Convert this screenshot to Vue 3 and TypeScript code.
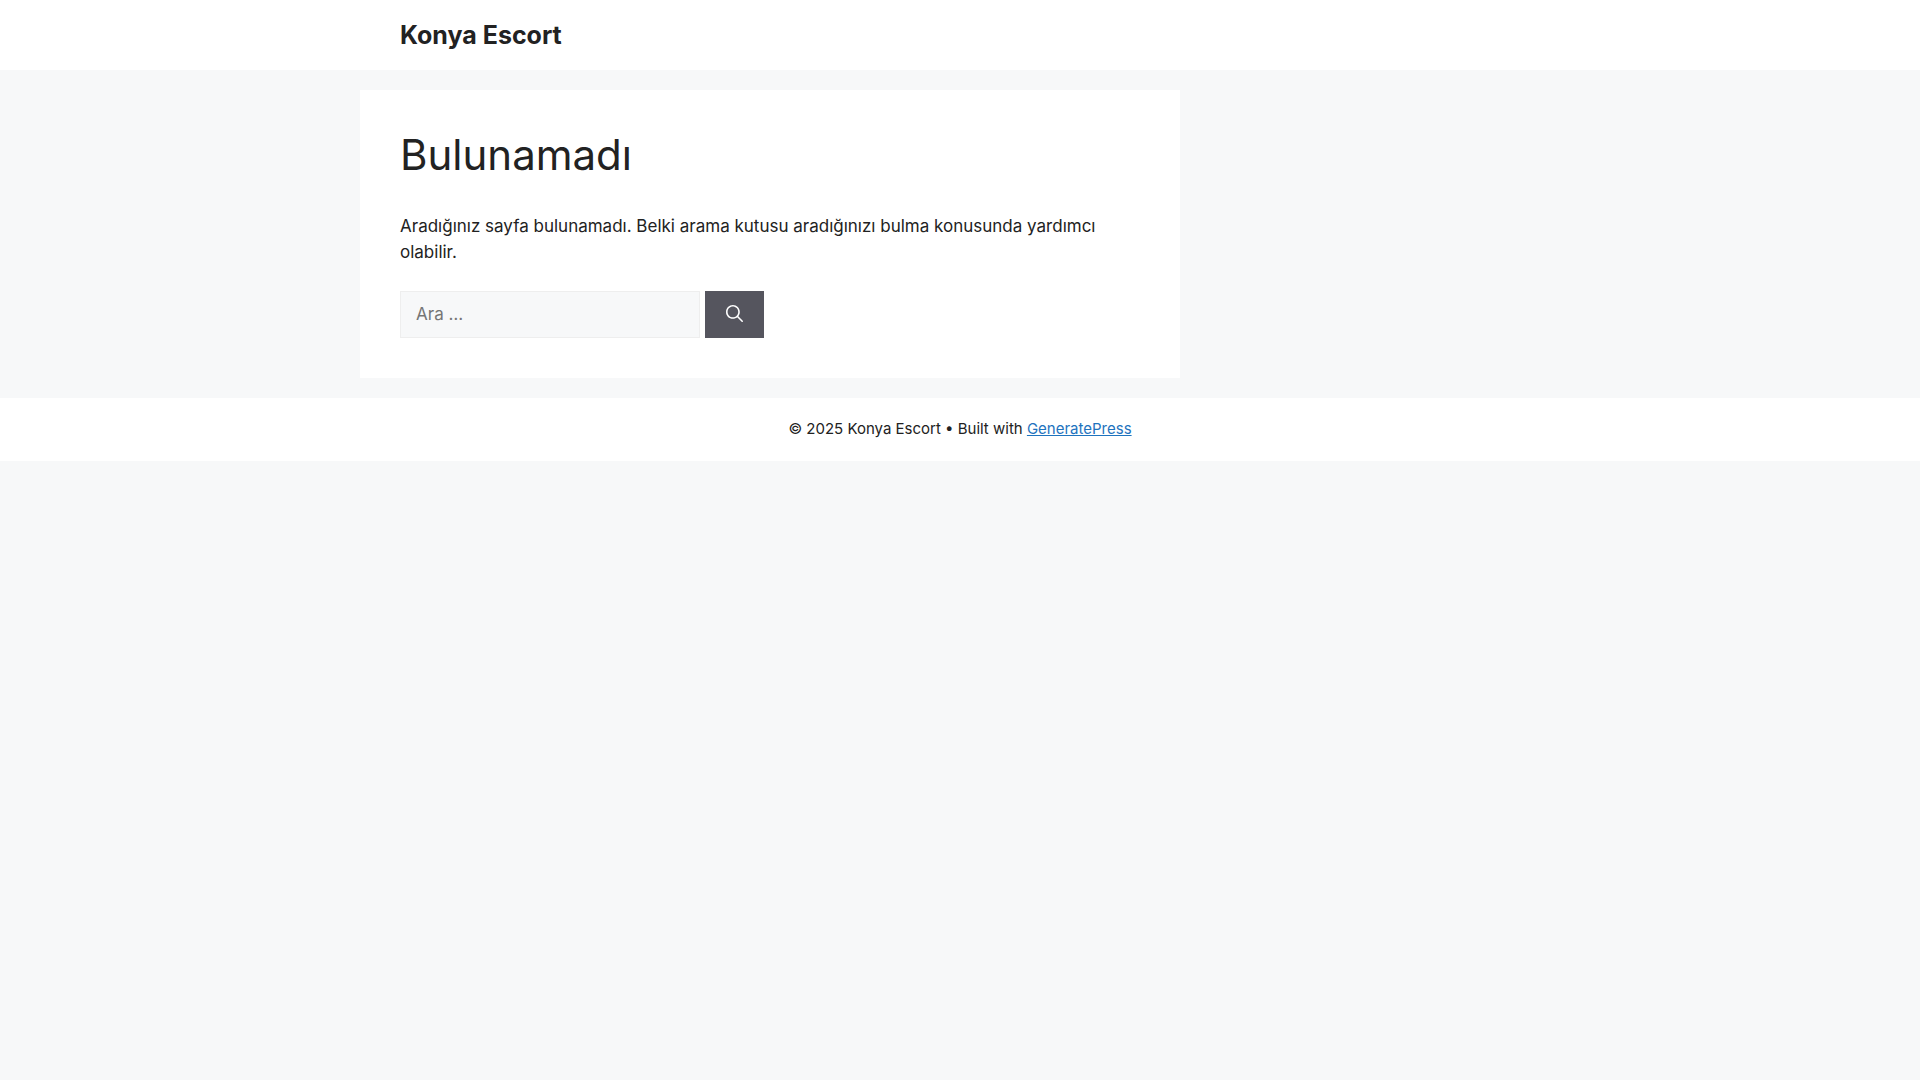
<script setup lang="ts">
import { ref } from 'vue'

const query = ref('')
</script>

<template>
  <div class="page">
    <header class="site-header">
      <div class="inside-header">
        <a class="site-title" href="#">Konya Escort</a>
      </div>
    </header>

    <div class="site-content">
      <main class="content-area">
        <h1>Bulunamadı</h1>
        <p>Aradığınız sayfa bulunamadı. Belki arama kutusu aradığınızı bulma konusunda yardımcı olabilir.</p>
        <form class="search-form" role="search" @submit.prevent>
          <input v-model="query" type="search" placeholder="Ara …" aria-label="Ara" />
          <button type="submit" aria-label="Ara">
            <svg viewBox="0 0 512 512" width="17" height="17" aria-hidden="true">
              <path
                fill="currentColor"
                fill-rule="evenodd"
                clip-rule="evenodd"
                d="M208 48c-88.366 0-160 71.634-160 160s71.634 160 160 160 160-71.634 160-160S296.366 48 208 48zM0 208C0 93.125 93.125 0 208 0s208 93.125 208 208c0 48.741-16.765 93.566-44.843 129.024l133.826 134.018c9.366 9.379 9.355 24.575-.025 33.941-9.379 9.366-24.575 9.355-33.941-.025L337.238 370.987C301.747 399.167 256.839 416 208 416 93.125 416 0 322.875 0 208z"
              />
            </svg>
          </button>
        </form>
      </main>
    </div>

    <footer class="site-info">
      <div>© 2025 Konya Escort • Built with <a href="https://generatepress.com">GeneratePress</a></div>
    </footer>
  </div>
</template>

<style>
body {
  background: #f7f8f9;
}
</style>

<style scoped>
.page {
  color: #222222;
  font-family: Inter, "Liberation Sans", sans-serif;
  font-size: 17px;
  line-height: 26px;
}

.site-header {
  background: #ffffff;
}

.inside-header {
  box-sizing: border-box;
  max-width: 1200px;
  margin: 0 auto;
  padding: 20px 40px;
  display: flex;
  align-items: center;
}

.site-title {
  color: #222222;
  font-size: 25px;
  font-weight: 700;
  line-height: 30px;
  text-decoration: none;
}

.site-content {
  display: flex;
  max-width: 1200px;
  margin: 0 auto;
}

.content-area {
  box-sizing: border-box;
  width: 820px;
  max-width: 100%;
  margin: 20px 0;
  padding: 40px;
  background: #ffffff;
}

h1 {
  margin: 0;
  font-size: 42px;
  font-weight: 400;
  line-height: 50px;
}

p {
  margin: 33px 0 26px;
}

.search-form {
  display: flex;
  gap: 5px;
}

input {
  box-sizing: border-box;
  width: 300px;
  height: 47px;
  min-width: 0;
  margin: 0;
  padding: 10px 15px 12px;
  border: 1px solid #eeeeee;
  border-radius: 0;
  background: #f7f8f9;
  color: #222222;
  font: inherit;
  appearance: none;
}

input::placeholder {
  color: #757575;
}

button {
  display: flex;
  align-items: center;
  justify-content: center;
  height: 47px;
  padding: 10px 21px 12px;
  border: 0;
  background: #55555e;
  color: #ffffff;
  cursor: pointer;
}

.site-info {
  padding: 20px 40px 21px;
  background: #ffffff;
  font-size: 15px;
  line-height: 22px;
  text-align: center;
}

.site-info a {
  color: #1e73be;
}
</style>
